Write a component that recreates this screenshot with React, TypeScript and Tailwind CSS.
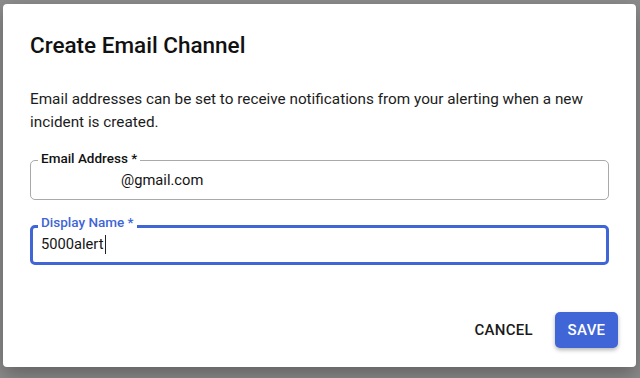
import React from 'react';

const OutlinedField = ({
  label,
  value,
  focused,
  hiddenPrefix,
}: {
  label: string;
  value: string;
  focused?: boolean;
  hiddenPrefix?: boolean;
}) => {
  return (
    <div className="relative">
      <div
        className={`h-[40px] rounded-[5px] flex items-center text-[14.7px] leading-[20px] text-[#141414] ${
          focused ? 'border-[3px] border-[#3f65d6] pl-[8px] pb-[2px]' : 'border border-[#a9a9a9] pl-[10px]'
        }`}
      >
        {hiddenPrefix && <span className="inline-block w-[80px]" />}
        <span>{value}</span>
        {focused && <span className="w-px h-[19px] bg-[#222] ml-px" />}
      </div>
      <span
        className={`absolute left-[8px] bg-white px-[3px] text-[13.5px] leading-[16px] font-medium ${
          focused ? 'top-[-11px] text-[#3f65d6]' : 'top-[-10px] text-[#111]'
        }`}
      >
        {label}
      </span>
    </div>
  );
};

const App = () => {
  return (
    <div
      className="w-[640px] h-[378px] bg-[#8c8c8c] pt-[4px] pl-[3px] overflow-hidden"
      style={{ fontFamily: 'Roboto, "Liberation Sans", sans-serif' }}
    >
      <div className="w-[633px] h-[363px] bg-white rounded-[4px] shadow-[0_8px_20px_rgba(0,0,0,0.3)] flex flex-col px-[27px] pt-[25px]">
        <h2 className="text-[22.5px] leading-[32px] font-medium text-[#111]">
          Create Email Channel
        </h2>
        <p className="mt-[27px] text-[15.3px] leading-[23px] text-[#1c1c1c]">
          Email addresses can be set to receive notifications from your alerting when a new
          incident is created.
        </p>
        <div className="mt-[26px] flex flex-col gap-[25px] w-[579px]">
          <OutlinedField label="Email Address *" value="@gmail.com" hiddenPrefix />
          <OutlinedField label="Display Name *" value="5000alert" focused />
        </div>
        <div className="mt-auto mb-[19px] flex justify-end items-center gap-[8px] mr-[-9px]">
          <button className="h-[36px] px-[14px] text-[15px] font-medium tracking-[0.3px] text-[#1a1a1a]">
            CANCEL
          </button>
          <button className="h-[36px] w-[63px] rounded-[5px] bg-[#3f65d6] text-white text-[15px] font-medium tracking-[0.3px] shadow-[0_2px_4px_rgba(0,0,0,0.3)]">
            SAVE
          </button>
        </div>
      </div>
    </div>
  );
};

export default App;
